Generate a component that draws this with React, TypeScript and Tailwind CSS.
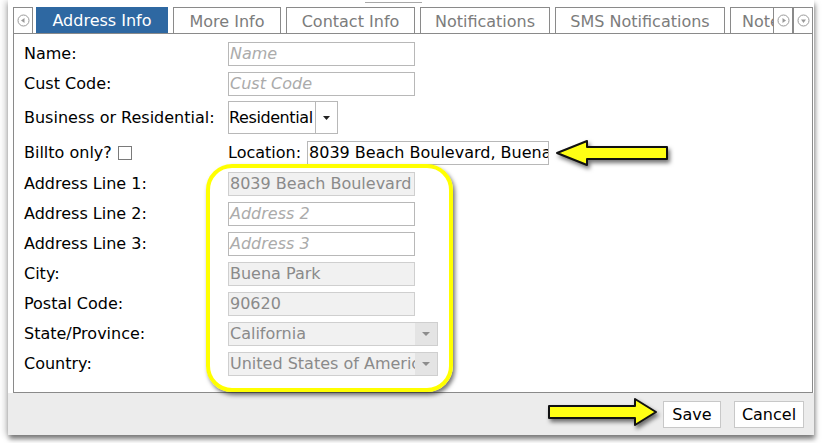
import React from 'react';

const FONT = { fontFamily: '"DejaVu Sans", Verdana, sans-serif' };

const TABS = [
  { label: 'Address Info', w: 'w-[132px]', active: true },
  { label: 'More Info', w: 'w-[108px]' },
  { label: 'Contact Info', w: 'w-[129px]' },
  { label: 'Notifications', w: 'w-[130px]' },
  { label: 'SMS Notifications', w: 'w-[170px]' },
];

const CircleIcon = ({ dir }: { dir: 'left' | 'right' | 'down' }) => {
  const pts = dir === 'left' ? '7.5,4 4,6.5 7.5,9' : dir === 'right' ? '5.5,4 9,6.5 5.5,9' : '4,5.5 9,5.5 6.5,9';
  return (
    <svg width="13" height="13" viewBox="0 0 13 13">
      <circle cx="6.5" cy="6.5" r="5.5" fill="none" stroke="#9a9a9a" strokeWidth="1" />
      <polygon points={pts} fill="#9a9a9a" />
    </svg>
  );
};

const TextInput = ({ value, placeholder, disabled, w = 'w-[187px]' }: { value?: string; placeholder?: string; disabled?: boolean; w?: string }) => (
  <div
    className={`h-[24px] ${w} border flex items-center px-[1px] overflow-hidden whitespace-nowrap text-[16px] ${
      disabled ? 'bg-[#f1f1f1] border-[#cfcfcf] text-[#8a8a8a]' : 'bg-white border-[#b8b8b8] text-black'
    }`}
  >
    {value ? <span>{value}</span> : <span className="italic text-[#ababab]">{placeholder}</span>}
  </div>
);

const DisabledSelect = ({ value }: { value: string }) => (
  <div className="h-[24px] w-[210px] border border-[#cfcfcf] bg-[#f1f1f1] flex text-[16px] text-[#8a8a8a]">
    <div className="flex-1 overflow-hidden whitespace-nowrap px-[1px] flex items-center">{value}</div>
    <div className="w-[22px] bg-[#e4e4e4] flex items-center justify-center">
      <svg width="8" height="5" viewBox="0 0 8 5"><polygon points="0,0 8,0 4,4" fill="#8c8c8c" /></svg>
    </div>
  </div>
);

const Row = ({ label, h = 'h-[30px]', children }: { label: React.ReactNode; h?: string; children?: React.ReactNode }) => (
  <div className={`flex items-center ${h}`}>
    <div className="w-[204px] text-[16px] text-black whitespace-nowrap flex items-center">{label}</div>
    {children}
  </div>
);

const ArrowLeft = () => (
  <svg width="120" height="34" viewBox="0 0 120 34" className="absolute left-[553px] top-[138px]" style={{ filter: 'drop-shadow(2px 3px 2px rgba(0,0,0,0.55))' }}>
    <polygon points="4,15 34,3 34,9 114,9 114,21 34,21 34,27" fill="#ffff14" stroke="#111" strokeWidth="2" strokeLinejoin="round" />
  </svg>
);

const ArrowRight = () => (
  <svg width="118" height="34" viewBox="0 0 118 34" className="absolute left-[545px] top-[396px]" style={{ filter: 'drop-shadow(2px 3px 2px rgba(0,0,0,0.55))' }}>
    <polygon points="4,10 90,10 90,3 111,16 90,29 90,22 4,22" fill="#ffff14" stroke="#111" strokeWidth="2" strokeLinejoin="round" />
  </svg>
);

export default function App() {
  return (
    <div className="relative w-[827px] h-[443px] bg-white overflow-hidden" style={FONT}>
      <div className="ml-[8px] w-[806px] h-[435px] bg-white flex flex-col shadow-[1px_4px_5px_rgba(0,0,0,0.5),-4px_0_6px_rgba(0,0,0,0.12)]">
        {/* top strip */}
        <div className="h-[7px] relative">
          <div className="absolute left-[357px] top-[2px] w-[57px] h-px bg-[#a8a8a8]" />
        </div>

        {/* tabs */}
        <div className="h-[26px] pl-[5px] flex items-stretch relative">
          <div className="w-[20px] border border-b-0 border-[#8a8a8a] flex items-center justify-center">
            <CircleIcon dir="left" />
          </div>
          <div className="flex gap-[5px] ml-[3px] flex-1 overflow-hidden">
            {TABS.map((t) => (
              <div
                key={t.label}
                className={`${t.w} shrink-0 flex items-center justify-center pt-[2px] text-[16px] whitespace-nowrap ${
                  t.active ? 'bg-[#2e68a2] text-white' : 'border border-b-0 border-[#8a8a8a] text-[#7c7c7c] bg-white'
                }`}
              >
                {t.label}
              </div>
            ))}
            <div className="w-[60px] shrink-0 border border-b-0 border-[#8a8a8a] text-[#7c7c7c] text-[16px] flex items-center pt-[2px] pl-[11px] overflow-hidden whitespace-nowrap">
              Notes
            </div>
          </div>
          <div className="absolute right-[21px] top-0 bottom-0 w-[20px] bg-white border border-b-0 border-[#8a8a8a] flex items-center justify-center">
            <CircleIcon dir="right" />
          </div>
          <div className="absolute right-[1px] top-0 bottom-0 w-[20px] bg-white border border-b-0 border-[#8a8a8a] flex items-center justify-center">
            <CircleIcon dir="down" />
          </div>
        </div>

        {/* panel */}
        <div className="ml-[5px] mr-[1px] h-[360px] border border-[#8a8a8a] bg-white pl-[10px] pt-[5px]">
          <Row label="Name:"><TextInput placeholder="Name" /></Row>
          <Row label="Cust Code:"><TextInput placeholder="Cust Code" /></Row>
          <Row label="Business or Residential:" h="h-[37px]">
            <div className="h-[33px] w-[110px] border border-[#b8b8b8] flex text-[16px] text-black">
              <div className="flex-1 flex items-center overflow-hidden whitespace-nowrap tracking-[-0.4px]">Residential</div>
              <div className="w-[22px] border-l border-[#b8b8b8] flex items-center justify-center">
                <svg width="7" height="4" viewBox="0 0 7 4"><polygon points="0,0 7,0 3.5,4" fill="#222" /></svg>
              </div>
            </div>
          </Row>
          <Row
            h="h-[33px]"
            label={
              <>
                Billto only?
                <span className="ml-[6px] w-[14px] h-[14px] border border-[#7a7a7a] bg-white inline-block" />
              </>
            }
          >
            <span className="text-[16px] text-black mr-[6px]">Location:</span>
            <TextInput value="8039 Beach Boulevard, Buena Park" w="w-[242px]" />
          </Row>
          <Row label="Address Line 1:"><TextInput value="8039 Beach Boulevard" disabled /></Row>
          <Row label="Address Line 2:"><TextInput placeholder="Address 2" /></Row>
          <Row label="Address Line 3:"><TextInput placeholder="Address 3" /></Row>
          <Row label="City:"><TextInput value="Buena Park" disabled /></Row>
          <Row label="Postal Code:"><TextInput value="90620" disabled /></Row>
          <Row label="State/Province:"><DisabledSelect value="California" /></Row>
          <Row label="Country:"><DisabledSelect value="United States of America" /></Row>
        </div>

        {/* footer */}
        <div className="flex-1 bg-[#ececec] flex items-start justify-end gap-[13px] pr-[10px] pt-[8px]">
          <button className="w-[58px] h-[27px] bg-white border border-[#c8c8c8] text-[16px] text-black">Save</button>
          <button className="w-[70px] h-[27px] bg-white border border-[#c8c8c8] text-[16px] text-black">Cancel</button>
        </div>
      </div>

      {/* annotations */}
      <div className="absolute left-[206px] top-[164px] w-[247px] h-[228px] rounded-[26px] border-[4px] border-[#ffff00] shadow-[2px_3px_4px_rgba(0,0,0,0.55)]" />
      <ArrowLeft />
      <ArrowRight />
    </div>
  );
}
